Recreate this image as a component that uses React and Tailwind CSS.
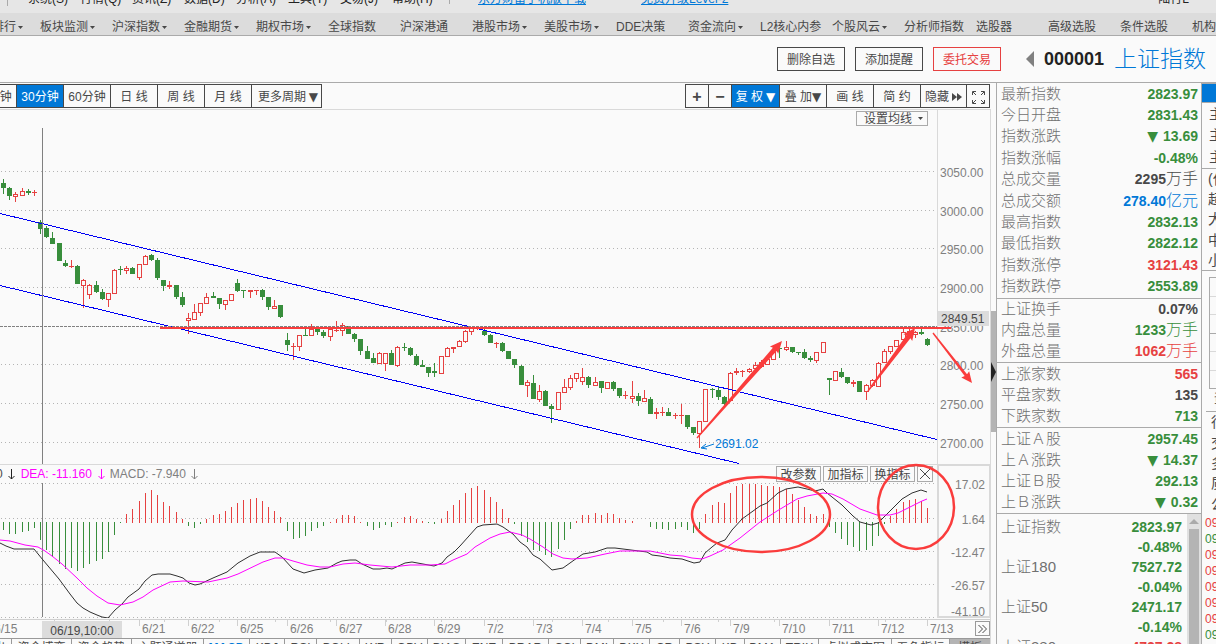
import React, { useState } from "react";

const menus = ["系统(S)", "行情(Q)", "资讯(Z)", "数据(D)", "分析(A)", "工具(T)", "交易(J)", "帮助(H)"];

const navItems = [
  { name: "涨幅排行", menu: true },
  { name: "板块监测", menu: true },
  { name: "沪深指数", menu: true },
  { name: "金融期货", menu: true },
  { name: "期权市场", menu: true },
  { name: "全球指数" },
  { name: "沪深港通" },
  { name: "港股市场", menu: true },
  { name: "美股市场", menu: true },
  { name: "DDE决策" },
  { name: "资金流向", menu: true },
  { name: "L2核心内参" },
  { name: "个股风云", menu: true },
  { name: "分析师指数" },
  { name: "选股器" },
  { name: "高级选股" },
  { name: "条件选股" },
  { name: "机构" },
];

const periods = ["15分钟", "30分钟", "60分钟", "日 线", "周 线", "月 线"];

const candles = [
  [3, 179, 194, 183, 188, 0], [9, 187, 200, 188, 196, 0], [15, 192, 202, 194, 197, 1], [22, 188, 196, 191, 196, 1], [28, 189, 195, 191, 193, 0], [34, 190, 196, 192, 193, 1],
  [40, 220, 234, 222, 229, 0], [46, 226, 238, 228, 237, 0], [52, 232, 244, 238, 244, 0], [59, 243, 261, 243, 261, 0], [65, 260, 267, 263, 266, 0], [71, 260, 268, 266, 267, 1], [77, 265, 284, 266, 284, 0], [83, 279, 308, 280, 286, 1],
  [89, 284, 299, 285, 295, 1], [96, 281, 293, 285, 292, 0], [102, 289, 300, 292, 299, 0], [108, 293, 307, 293, 300, 1], [114, 269, 294, 270, 294, 1], [120, 266, 275, 269, 270, 0], [126, 266, 274, 268, 271, 1], [132, 267, 274, 268, 274, 0],
  [139, 264, 280, 264, 278, 1], [145, 255, 265, 256, 265, 1], [151, 254, 261, 255, 260, 0], [157, 258, 280, 260, 278, 0], [163, 280, 291, 280, 286, 0], [169, 281, 289, 285, 287, 1], [176, 285, 299, 285, 297, 0], [182, 292, 307, 297, 305, 0],
  [188, 313, 334, 318, 321, 1], [194, 304, 320, 312, 320, 1], [200, 303, 316, 303, 313, 1], [206, 293, 304, 297, 304, 1], [213, 292, 298, 296, 298, 0], [219, 298, 309, 298, 304, 0], [225, 300, 310, 300, 305, 1], [231, 294, 301, 294, 301, 1],
  [237, 279, 292, 283, 291, 0], [243, 290, 298, 290, 291, 0], [250, 290, 298, 290, 292, 1], [256, 290, 295, 290, 291, 1], [262, 289, 300, 290, 297, 0], [268, 297, 310, 297, 307, 0], [274, 300, 309, 306, 309, 1], [280, 305, 318, 305, 317, 0],
  [287, 333, 351, 340, 345, 0], [293, 343, 360, 346, 347, 1], [299, 335, 351, 335, 347, 1], [305, 328, 336, 335, 336, 0], [311, 324, 336, 329, 336, 1], [317, 328, 335, 329, 332, 0], [323, 330, 338, 332, 336, 0], [330, 329, 341, 329, 337, 1],
  [336, 321, 332, 330, 331, 1], [342, 323, 336, 325, 331, 1], [348, 326, 334, 326, 334, 0], [354, 333, 342, 334, 339, 0], [360, 339, 355, 339, 351, 0], [367, 346, 359, 351, 359, 0], [373, 353, 363, 358, 363, 0], [379, 352, 364, 353, 364, 1],
  [385, 353, 371, 353, 364, 1], [391, 350, 365, 353, 365, 0], [397, 346, 367, 347, 366, 1], [404, 343, 351, 347, 348, 0], [410, 347, 356, 348, 355, 0], [416, 354, 366, 356, 365, 0], [422, 360, 367, 365, 367, 0], [428, 367, 377, 367, 373, 0],
  [434, 363, 377, 371, 373, 0], [441, 356, 374, 356, 374, 1], [447, 347, 357, 348, 357, 1], [453, 347, 353, 347, 349, 1], [459, 340, 347, 341, 347, 1], [465, 330, 343, 331, 342, 1], [471, 328, 335, 328, 332, 1], [477, 326, 330, 328, 329, 1],
  [484, 329, 336, 331, 335, 0], [490, 334, 343, 335, 343, 0], [496, 342, 348, 343, 344, 1], [502, 342, 352, 343, 351, 0], [508, 351, 359, 351, 359, 0], [514, 359, 368, 359, 365, 0], [521, 365, 385, 366, 385, 0], [527, 380, 397, 382, 386, 1],
  [533, 375, 399, 383, 399, 0], [539, 385, 402, 391, 400, 1], [545, 390, 406, 391, 406, 0], [551, 404, 423, 406, 409, 0], [558, 392, 410, 392, 410, 1], [564, 379, 393, 387, 393, 1], [570, 375, 390, 378, 388, 1], [576, 373, 382, 373, 379, 1],
  [582, 368, 385, 377, 382, 1], [588, 376, 388, 377, 385, 0], [595, 377, 386, 382, 386, 1], [601, 381, 393, 381, 388, 0], [607, 382, 389, 382, 389, 1], [613, 381, 391, 382, 389, 0], [619, 388, 398, 388, 396, 0], [625, 391, 399, 395, 396, 1],
  [632, 381, 403, 396, 399, 1], [638, 393, 406, 396, 401, 0], [644, 390, 402, 398, 402, 1], [650, 397, 414, 399, 414, 0], [656, 408, 419, 412, 414, 1], [662, 407, 416, 412, 413, 1], [668, 408, 416, 412, 416, 0], [675, 413, 419, 415, 416, 1],
  [681, 404, 424, 415, 416, 1], [687, 415, 429, 415, 427, 0], [693, 427, 435, 427, 433, 0], [699, 421, 448, 421, 434, 1], [705, 389, 422, 389, 422, 1], [712, 388, 398, 389, 390, 0], [718, 387, 400, 390, 397, 0], [724, 396, 406, 397, 404, 0],
  [730, 372, 401, 373, 401, 1], [736, 368, 375, 371, 373, 1], [742, 370, 377, 371, 372, 1], [749, 368, 373, 369, 372, 1], [755, 362, 370, 365, 369, 1], [761, 360, 368, 362, 367, 1], [767, 359, 365, 359, 365, 1], [773, 350, 360, 352, 360, 1],
  [779, 348, 358, 348, 349, 0], [786, 341, 351, 347, 350, 1], [792, 347, 353, 347, 352, 0], [798, 352, 355, 352, 353, 0], [804, 349, 359, 352, 358, 0], [810, 356, 362, 358, 360, 0], [816, 352, 363, 352, 361, 1], [823, 342, 353, 342, 353, 1],
  [829, 378, 395, 378, 380, 0], [835, 371, 381, 371, 381, 1], [841, 368, 378, 372, 377, 0], [847, 377, 384, 377, 383, 0], [853, 380, 387, 382, 384, 1], [859, 381, 392, 381, 392, 0], [866, 384, 400, 385, 392, 1], [872, 379, 387, 380, 386, 1],
  [878, 362, 387, 363, 387, 1], [884, 349, 363, 351, 363, 1], [890, 346, 354, 346, 352, 1], [896, 340, 347, 340, 347, 1], [903, 328, 341, 332, 340, 1], [909, 329, 337, 331, 335, 1], [915, 331, 338, 332, 335, 1], [921, 328, 335, 332, 334, 0],
  [927, 338, 346, 339, 345, 0],
];

// far end of every histogram bar, in the order of the candles
const macdBars = [
  530, 534, 534, 532, 531, 528,
  540, 550, 557, 564, 569, 568, 571, 568,
  564, 561, 559, 552, 535, 523, 514, 509,
  501, 493, 490, 495, 502, 506, 512, 519,
  526, 528, 524, 519, 515, 514, 511, 507,
  503, 500, 499, 498, 501, 507, 511, 517,
  531, 539, 538, 536, 531, 528, 526, 522,
  519, 515, 515, 516, 522, 526, 530, 528,
  525, 527, 522, 517, 516, 519, 521, 523,
  524, 519, 511, 505, 500, 493, 488, 486,
  490, 497, 502, 509, 518, 524, 536, 542,
  550, 551, 555, 557, 549, 540, 529, 521,
  515, 515, 513, 515, 513, 514, 518, 520,
  521, null, null, 527, 529, 529, 530, 529,
  527, 530, 533, 529, 514, 505, 502, 503,
  493, 486, 484, 484, 484, 485, 486, 486,
  487, 489, 494, 500, 507, 514, 516, 514,
  527, 533, 539, 545, 547, 551, 550, 546,
  536, 524, 516, 509, 502, 500, 499, 501,
  508,
];

const difLine =
  "0,543 6,546 14,549 34,549 43,560 59,579 70,594 77,603 83,608 90,612 97,615 102,617 108,618 115,610 122,604 128,597 139,589 145,581 152,575 158,574 170,574 177,576 183,578 189,583 195,585 200,584 213,578 227,572 238,563 250,556 260,552 275,552 282,557 293,569 304,573 315,570 328,568 337,563 342,561 350,560 356,560 362,564 373,569 380,569 387,568 392,569 405,563 412,562 423,564 434,566 442,563 447,557 454,552 460,546 477,527 483,525 497,524 503,527 513,534 520,542 527,547 533,555 540,559 552,570 563,568 570,563 577,558 583,554 595,552 607,548 615,548 623,549 647,552 652,555 660,556 670,558 682,559 688,561 694,563 700,562 705,553 712,547 717,543 725,540 732,530 742,519 760,506 767,503 778,493 786,489 798,487 807,489 815,491 823,489 827,493 842,505 853,516 860,522 871,525 878,523 890,511 902,499 912,493 921,490 927,492";
const deaLine =
  "0,540 10,541 25,545 38,547 45,551 52,556 62,564 77,578 87,588 97,596 108,603 120,605 133,602 143,597 153,590 170,582 183,581 208,582 227,578 238,574 263,562 275,558 283,558 293,561 307,565 320,567 330,567 343,564 355,563 370,565 392,567 410,565 430,565 445,564 453,560 467,554 475,547 490,538 500,534 510,532 522,535 530,539 543,547 553,554 563,558 572,559 587,558 605,554 620,551 650,551 670,555 683,556 692,558 702,559 710,556 723,550 740,538 760,522 777,511 797,499 807,496 823,493 832,494 843,499 860,509 877,515 890,515 898,513 912,506 922,501 927,499";

const priceTicks = [
  [171, "3050.00"], [210, "3000.00"], [248, "2950.00"], [287, "2900.00"],
  [326, "2850.00"], [364, "2800.00"], [403, "2750.00"], [442, "2700.00"],
];
const macdTicks = [
  [483, 489, "17.02"], [518, 524, "1.64"], [551, 557, "-12.47"], [584, 590, "-26.57"], [617, 616, "-41.10"],
];
const dates = [
  [-9, "6/15"], [139, "6/21"], [188, "6/22"], [237, "6/25"], [287, "6/26"], [336, "6/27"],
  [385, "6/28"], [434, "6/29"], [484, "7/2"], [533, "7/3"], [582, "7/4"], [632, "7/5"],
  [681, "7/6"], [730, "7/9"], [779, "7/10"], [829, "7/11"], [878, "7/12"], [927, "7/13"],
];
const minorTicks = [54, 109, 164, 219, 275, 330, 386, 441, 497, 552, 608, 663, 718, 774, 829, 885];

const indicators = [
  ["主力进出", "w-[60px]"], ["资金博弈", "w-[60px]"], ["资金趋势", "w-[60px]"], ["主题通道器", "w-[72px]"],
  ["MACD", "w-[46px]"], ["KDJ", "w-[35px]"], ["RSI", "w-[32px]"], ["BOLL", "w-[43px]"],
  ["WR", "w-[32px]"], ["OBV", "w-[36px]"], ["BIAS", "w-[38px]"], ["ENE", "w-[37px]"],
  ["BRAR", "w-[46px]"], ["CCI", "w-[32px]"], ["DMI", "w-[33px]"], ["DKX", "w-[36px]"],
  ["CR", "w-[30px]"], ["PSY", "w-[36px]"], ["KD", "w-[29px]"], ["DMA", "w-[36px]"],
  ["TRIX", "w-[38px]"], ["虚拟成交图", "w-[73px]"], ["五色指标", "w-[58px]"],
];

const GREEN = "text-[#388e3c]";
const RED = "text-[#e64141]";
const DARK = "text-[#484848]";

const quoteGroups = [
  {
    size: "h-[216px]",
    rows: [
      { label: "最新指数", value: "2823.97", color: GREEN },
      { label: "今日开盘", value: "2831.43", color: GREEN },
      { label: "指数涨跌", value: "13.69", color: GREEN, down: true },
      { label: "指数涨幅", value: "-0.48%", color: GREEN },
      { label: "总成交量", value: "2295", unit: "万手", color: DARK },
      { label: "总成交额", value: "278.40", unit: "亿元", color: "text-[#0078d7]" },
      { label: "最高指数", value: "2832.13", color: GREEN },
      { label: "最低指数", value: "2822.12", color: GREEN },
      { label: "指数涨停", value: "3121.43", color: RED },
      { label: "指数跌停", value: "2553.89", color: GREEN },
    ],
  },
  {
    size: "h-[64px]",
    rows: [
      { label: "上证换手", value: "0.07%", color: DARK },
      { label: "内盘总量", value: "1233", unit: "万手", color: GREEN },
      { label: "外盘总量", value: "1062", unit: "万手", color: RED },
    ],
  },
  {
    size: "h-[65px]",
    rows: [
      { label: "上涨家数", value: "565", color: RED },
      { label: "平盘家数", value: "135", color: DARK },
      { label: "下跌家数", value: "713", color: GREEN },
    ],
  },
  {
    size: "h-[86px]",
    rows: [
      { label: "上证Ａ股", value: "2957.45", color: GREEN },
      { label: "上Ａ涨跌", value: "14.37", color: GREEN, down: true },
      { label: "上证Ｂ股", value: "292.13", color: GREEN },
      { label: "上Ｂ涨跌", value: "0.32", color: GREEN, down: true },
    ],
  },
];

const indexList = [
  ["上证指数", "2823.97", "-0.48%", GREEN],
  ["上证180", "7527.72", "-0.04%", GREEN],
  ["上证50", "2471.17", "-0.14%", GREEN],
  ["上证380", "4727.28", "-0.91%", RED],
];

const ticks = [RED, GREEN, RED, RED, RED, RED, RED, GREEN];

function App() {
  return (
    <div className="h-screen overflow-hidden flex flex-col bg-[#fafafa] text-[12px] text-[#484848] font-['Liberation_Sans','Noto_Sans_CJK_SC',sans-serif]">
      <MenuBar />
      <NavBar />
      <StockHeader />
      <main className="flex flex-1 min-h-0">
        <section className="flex-1 min-w-0 overflow-hidden">
          <Toolbar />
          <div className="flex">
            <div className="flex-1 min-w-0 border-t border-[#d9d9d9]">
              <PriceChart />
              <MacdChart />
              <TimeAxis />
              <IndicatorTabs />
            </div>
            <div className="w-[6px] shrink-0 border-l border-[#d9d9d9] pt-[202px]">
              <div className="h-[121px] bg-[#b4b4b4] flex items-center">
                <svg viewBox="0 0 5 20" className="w-[5px] h-[20px]">
                  <path d="M0 0 L5 10 L0 20 Z" fill="#222" />
                </svg>
              </div>
            </div>
          </div>
        </section>
        <QuotePanel />
        <SidePanel />
      </main>
    </div>
  );
}

function MenuBar() {
  return (
    <header className="h-[13px] shrink-0 overflow-hidden bg-[#e6e6e6] flex items-start whitespace-nowrap leading-none text-[#222]">
      <div className="w-[8px] h-[6px] border-r border-[#aaa] mr-[20px]"></div>
      {menus.map((m) => (
        <button key={m} className="w-[52px] shrink-0 text-left -mt-[7px] leading-3">
          {m}
        </button>
      ))}
      <div className="w-[6px] h-[4px] border-r border-[#aaa] mr-[28px]"></div>
      <a href="#mobile" className="-mt-[7px] leading-3 underline text-[#0078d7] mr-[55px]">
        东方财富手机版下载
      </a>
      <a href="#level2" className="-mt-[7px] leading-3 underline text-[#0078d7]">
        免费升级Level-2
      </a>
      <span className="ml-auto mr-[27px] -mt-[7px] leading-3">陆行L</span>
    </header>
  );
}

function Caret() {
  return (
    <svg viewBox="0 0 5 3" className="w-[5px] h-[3px] shrink-0">
      <path d="M0 0 H5 L2.5 3 Z" fill="currentColor" />
    </svg>
  );
}

function Triangle() {
  return <span className="font-['DejaVu_Sans',sans-serif] font-normal">▼</span>;
}

function NavBar() {
  return (
    <nav className="h-[23px] shrink-0 bg-[#dcdcdc] border-b border-[#aaa] overflow-hidden">
      <div className="flex -ml-8 h-full pt-[6px]">
        {navItems.map((item) => (
          <button key={item.name} className="w-[72px] shrink-0 flex items-center gap-[2px] whitespace-nowrap">
            {item.name}
            {item.menu && <Caret />}
          </button>
        ))}
      </div>
    </nav>
  );
}

function StockHeader() {
  return (
    <div className="h-[47px] shrink-0 border-b border-[#aaa] flex justify-end items-center pr-[10px] whitespace-nowrap">
      <div className="flex gap-[10px]">
        <button className="w-[68px] h-[24px] pt-[2px] border border-[#484848]">删除自选</button>
        <button className="w-[68px] h-[24px] pt-[2px] border border-[#484848]">添加提醒</button>
        <button className="w-[68px] h-[24px] pt-[2px] border border-[#e64141] text-[#e64141]">委托交易</button>
      </div>
      <button className="ml-[25px] mr-[10px]" aria-label="previous">
        <svg viewBox="0 0 8 16" className="w-[8px] h-[16px]">
          <path d="M8 0 V16 L0 8 Z" fill="#808080" />
        </svg>
      </button>
      <span className="text-[18px] font-bold text-[#222]">000001</span>
      <h1 className="ml-[10px] text-[23px] leading-6 font-light text-[#0078d7]">上证指数</h1>
    </div>
  );
}

function Toolbar() {
  const [period, setPeriod] = useState("30分钟");
  const cell = "h-full pt-[2px] border-r border-[#484848] shrink-0 whitespace-nowrap flex items-center justify-center";
  return (
    <div className="flex justify-between pt-px pb-px pr-[6px]">
      <div className="flex h-[24px] -ml-[30px] border-y border-[#484848]">
        {periods.map((p) => (
          <button
            key={p}
            onClick={() => setPeriod(p)}
            className={cell + " w-[47px] " + (p === period ? "bg-[#0078d7] text-white" : "")}
          >
            {p}
          </button>
        ))}
        <div className={cell + " w-[70px] relative"}>
          <select aria-label="更多周期" className="appearance-none w-full h-full pl-[6px]">
            <option>更多周期</option>
          </select>
          <span className="absolute right-[3px] pointer-events-none">
            <Triangle />
          </span>
        </div>
      </div>
      <div className="flex h-[24px] border-y border-l border-[#484848]">
        <button className={cell + " w-[23px] text-[16px] font-bold"}>+</button>
        <button className={cell + " w-[23px] text-[16px] font-bold"}>−</button>
        <button className={cell + " w-[48px] gap-[3px] bg-[#0078d7] text-white"}>
          复 权 <Triangle />
        </button>
        <button className={cell + " w-[47px]"}>
          叠 加 <Triangle />
        </button>
        <button className={cell + " w-[47px]"}>画 线</button>
        <button className={cell + " w-[47px]"}>简 约</button>
        <button className={cell + " w-[46px] gap-[3px]"}>
          隐藏
          <svg viewBox="0 0 10 8" className="w-[10px] h-[8px]">
            <path d="M0 0 L5 4 L0 8 Z M5 0 L10 4 L5 8 Z" fill="currentColor" />
          </svg>
        </button>
        <button className={cell + " w-[23px]"} aria-label="全屏">
          <svg viewBox="0 0 13 13" className="w-[13px] h-[13px]" fill="none" stroke="currentColor">
            <path d="M0.5 4 V0.5 H4 M9 0.5 H12.5 V4 M12.5 9 V12.5 H9 M4 12.5 H0.5 V9" />
            <path d="M1 1 L4 4 M12 1 L9 4 M12 12 L9 9 M1 12 L4 9" />
          </svg>
        </button>
      </div>
    </div>
  );
}

function GridLine({ y }) {
  return <line x1="1" x2="937" y1={y + 0.5} y2={y + 0.5} stroke="#b4b4b4" strokeDasharray="1 3" />;
}

// arrow whose shaft grows from a thin tail to the head
function Arrow({ from, to, shaft, head }) {
  const [x1, y1] = from;
  const [x2, y2] = to;
  const len = Math.hypot(x2 - x1, y2 - y1);
  const ux = (x2 - x1) / len;
  const uy = (y2 - y1) / len;
  const at = (along, side) => `${x1 + ux * along - uy * side},${y1 + uy * along + ux * side}`;
  const neck = len - head;
  const points = [
    at(0, -0.7), at(neck, -shaft / 2), at(neck - 1, -head / 2), at(len, 0),
    at(neck - 1, head / 2), at(neck, shaft / 2), at(0, 0.7),
  ].join(" ");
  return <polygon points={points} fill="#fa3c3c" />;
}

function PriceChart() {
  return (
    <div className="relative">
      <svg viewBox="0 110 990 354" className="block w-full h-auto" fontSize="12">
        <g shapeRendering="crispEdges">
          {priceTicks.map(([y]) => (
            <GridLine key={y} y={y} />
          ))}
          {candles.map(([x, high, low, top, bottom, up]) => (
            <g key={x} fill={up ? "#e64141" : "#388e3c"}>
              <rect x={x} y={high} width="1" height={low - high} />
              <rect x={x - 2} y={top} width="5" height={bottom - top} />
              {up === 1 && bottom - top > 2 && (
                <rect x={x - 1} y={top + 1} width="3" height={bottom - top - 2} fill="#fafafa" />
              )}
            </g>
          ))}
          <path d="M0 213.5 L937 439.5 M0 285.5 L739 463.5" stroke="#0000f5" fill="none" />
          <line x1="42.5" x2="42.5" y1="128" y2="464" stroke="#808080" />
          <line x1="0" x2="937" y1="326.5" y2="326.5" stroke="#808080" strokeDasharray="3 1" />
          <line x1="937.5" x2="937.5" y1="110" y2="464" stroke="#d9d9d9" />
        </g>
        <g fill="#808080">
          {priceTicks.map(([y, label]) => (
            <text key={label} x="940" y={y + 6}>
              {label}
            </text>
          ))}
        </g>
        <rect x="938" y="311" width="51" height="15" fill="#dcdcdc" />
        <text x="941" y="323" fill="#484848">
          2849.51
        </text>
        <text x="715" y="448" fill="#0078d7">
          2691.02
        </text>
        <path d="M714 444 L702 448 M706 444 L701 448 L707 449" stroke="#0078d7" fill="none" />
        <rect x="160" y="327" width="791" height="2" fill="#fa3c3c" />
        <Arrow from={[697, 438]} to={[782, 341]} shaft={5} head={11} />
        <Arrow from={[868, 391]} to={[915, 328]} shaft={5} head={11} />
        <Arrow from={[933, 333]} to={[972, 383]} shaft={3} head={10} />
      </svg>
      <div className="absolute top-[1px] right-[62px] w-[72px] h-[15px] border border-[#aaa] bg-[#fafafa] flex items-center">
        <select aria-label="均线" className="appearance-none w-full h-[15px] leading-[15px] pt-px pl-[7px]">
          <option>设置均线</option>
        </select>
        <span className="absolute right-[4px] flex pointer-events-none">
          <Caret />
        </span>
      </div>
    </div>
  );
}

function DownArrow() {
  return (
    <svg viewBox="0 0 7 11" className="w-[7px] h-[11px]" fill="none" stroke="currentColor">
      <path d="M3.5 0 V10 M0.5 7 L3.5 10 L6.5 7" />
    </svg>
  );
}

function MacdChart() {
  return (
    <div className="relative">
      <svg viewBox="0 464 990 154" className="block w-full h-auto" fontSize="12">
        <g shapeRendering="crispEdges">
          <rect x="0" y="464" width="990" height="1" fill="#d9d9d9" />
          {macdTicks.map(([y]) => (
            <GridLine key={y} y={y} />
          ))}
          {macdBars.map((end, i) => {
            if (end === null) return null;
            const x = candles[i][0];
            return end > 522 ? (
              <rect key={x} x={x} y="522" width="1" height={end - 522} fill="#388e3c" />
            ) : (
              <rect key={x} x={x} y={end} width="1" height={523 - end} fill="#e64141" />
            );
          })}
          <line x1="42.5" x2="42.5" y1="483" y2="617" stroke="#808080" />
          <rect x="938" y="465" width="52" height="152" fill="none" stroke="#d9d9d9" strokeWidth="2" />
        </g>
        <polyline points={difLine} fill="none" stroke="#303030" />
        <polyline points={deaLine} fill="none" stroke="#f0f" />
        <g fill="#808080" textAnchor="end">
          {macdTicks.map(([, y, label]) => (
            <text key={label} x="985" y={y}>
              {label}
            </text>
          ))}
        </g>
      </svg>
      <div className="absolute inset-x-0 top-[2px] flex items-center justify-between pr-[57px]">
        <div className="flex items-center -ml-1 h-4 whitespace-nowrap">
          <span>0</span>
          <span className="ml-[5px] flex text-[#222]">
            <DownArrow />
          </span>
          <span className="ml-[6px] flex items-center gap-[6px] text-[#f0f]">
            DEA: -11.160
            <DownArrow />
          </span>
          <span className="ml-[5px] flex items-center gap-[5px] text-[#808080]">
            MACD: -7.940
            <DownArrow />
          </span>
        </div>
        <div className="flex gap-[2px] leading-none">
          {["改参数", "加指标", "换指标"].map((b) => (
            <button key={b} className="w-[45px] h-4 pt-px border border-[#aaa] bg-[#fafafa]">
              {b}
            </button>
          ))}
          <button aria-label="关闭" className="w-4 h-4 border border-[#aaa] bg-[#fafafa] flex items-center justify-center">
            <svg viewBox="0 0 10 10" className="w-[10px] h-[10px]" stroke="currentColor">
              <path d="M0 0 L10 10 M10 0 L0 10" />
            </svg>
          </button>
        </div>
      </div>
      <svg
        viewBox="0 464 990 154"
        className="absolute inset-0 w-full h-full overflow-visible pointer-events-none"
        fill="none"
        stroke="#fa3c3c"
        strokeWidth="2.5"
      >
        <ellipse cx="761" cy="514.5" rx="69" ry="37.5" />
        <ellipse cx="916" cy="507" rx="38" ry="42" />
      </svg>
    </div>
  );
}

function TimeAxis() {
  return (
    <div className="relative">
      <svg viewBox="0 618 990 20" className="block w-full h-auto" fontSize="12">
        <g fill="#d0d0d0" shapeRendering="crispEdges">
          <rect x="0" y="619" width="990" height="1" />
          {minorTicks.map((x) => (
            <rect key={x} x={x} y="619" width="1" height="3" />
          ))}
          {dates.map(([x]) => (
            <rect key={x} x={x} y="619" width="1" height="7" />
          ))}
        </g>
        <g fill="#808080">
          {dates.map(([x, label]) => (
            <text key={label} x={x + 3} y="633">
              {label}
            </text>
          ))}
        </g>
        <rect x="42" y="621" width="80" height="17" fill="#dcdcdc" />
        <text x="82" y="635" textAnchor="middle" fill="#484848">
          06/19,10:00
        </text>
      </svg>
      <button
        aria-label="更多"
        className="absolute right-0 top-[3px] w-[15px] h-[15px] border border-[#999] bg-[#fafafa] flex items-center justify-center"
      >
        <svg viewBox="0 0 9 8" className="w-[9px] h-[8px]" fill="none" stroke="currentColor">
          <path d="M0.5 0 L4.5 4 L0.5 8 M4.5 0 L8.5 4 L4.5 8" />
        </svg>
      </button>
    </div>
  );
}

function IndicatorTabs() {
  return (
    <div className="border-t border-[#999] flex overflow-hidden">
      <div className="flex -ml-[48px]">
        {indicators.map(([name, width]) => (
          <button
            key={name}
            className={
              "h-[18px] shrink-0 border-r border-[#999] whitespace-nowrap leading-4 " +
              width +
              (name === "MACD" ? " text-[#0078d7] font-bold" : "")
            }
          >
            {name}
          </button>
        ))}
      </div>
      <button className="ml-auto w-[40px] h-[18px] leading-4 bg-[#b4b4b4]">模板</button>
    </div>
  );
}

function QuotePanel() {
  return (
    <aside className="w-[206px] shrink-0 border-x border-[#aaa] overflow-hidden">
      {quoteGroups.map((group) => (
        <dl key={group.size} className={"grid auto-rows-fr border-b border-[#aaa] pl-[4px] pr-[3px] pb-px " + group.size}>
          {group.rows.map((row) => (
            <div key={row.label} className="flex items-center justify-between leading-5">
              <dt className="text-[15px] font-light text-[#707070]">{row.label}</dt>
              <dd className={"flex items-center " + row.color}>
                {row.down && (
                  <span className="text-[14px] mr-[5px]">
                    <Triangle />
                  </span>
                )}
                <span className="text-[14px] font-bold">{row.value}</span>
                {row.unit && <span className="text-[16px] font-light">{row.unit}</span>}
              </dd>
            </div>
          ))}
        </dl>
      ))}
      <div className="flex">
        <dl className="flex-1 pl-[4px] pr-[5px] pt-[3px]">
          {indexList.map(([label, value, change, color]) => (
            <div key={label} className="flex justify-between leading-5">
              <dt className="text-[15px] font-light text-[#707070]">{label}</dt>
              <dd className={"text-[14px] font-bold text-right " + color}>
                {value}
                <br />
                {change}
              </dd>
            </div>
          ))}
        </dl>
        <div className="w-[14px] bg-[#e0e0e0] flex flex-col items-center pt-[5px] gap-[5px]">
          <svg viewBox="0 0 10 5" className="w-[10px] h-[5px] shrink-0">
            <path d="M0 5 L5 0 L10 5 Z" fill="#aaa" />
          </svg>
          <div className="w-[10px] flex-1 bg-[#b4b4b4]"></div>
        </div>
      </div>
    </aside>
  );
}

function SidePanel() {
  return (
    <aside className="w-[14px] shrink-0 overflow-hidden whitespace-nowrap">
      <div className="h-[20px] border-y border-[#aaa] bg-[#0078d7]"></div>
      <div className="pl-[7px] h-[65px] flex flex-col justify-around text-[14px] leading-5">
        <span>主</span>
        <span>主</span>
        <span>主</span>
      </div>
      <div className="pl-[6px] h-[103px] border-y border-[#aaa] flex flex-col justify-around text-[14px] leading-5">
        <span>(亿</span>
        <span>超</span>
        <span>大</span>
        <span>中</span>
        <span>小</span>
      </div>
      <div className="ml-[7px] mt-[6px] h-[112px] border border-r-0 border-[#aaa] flex flex-col">
        <div className="flex-1 border-b border-dashed border-[#d9d9d9]"></div>
        <div className="flex-1 border-b border-dashed border-[#d9d9d9]"></div>
        <div className="flex-1 border-b border-[#aaa]"></div>
        <div className="flex-1 border-b border-dashed border-[#d9d9d9]"></div>
        <div className="flex-1 border-b border-dashed border-[#d9d9d9]"></div>
        <div className="flex-1"></div>
      </div>
      <div className="ml-[4px] pl-[8px] h-[23px] border-b border-[#aaa] leading-5">资</div>
      <div className="pl-[9px] h-[102px] flex flex-col justify-around text-[14px] leading-5">
        <span>行</span>
        <span>交</span>
        <span>多</span>
        <span>质</span>
        <span>公</span>
      </div>
      <div className="pl-[3px] pt-px leading-4">
        {ticks.map((color, i) => (
          <div key={i} className={color}>
            09
          </div>
        ))}
      </div>
    </aside>
  );
}

export default App;
